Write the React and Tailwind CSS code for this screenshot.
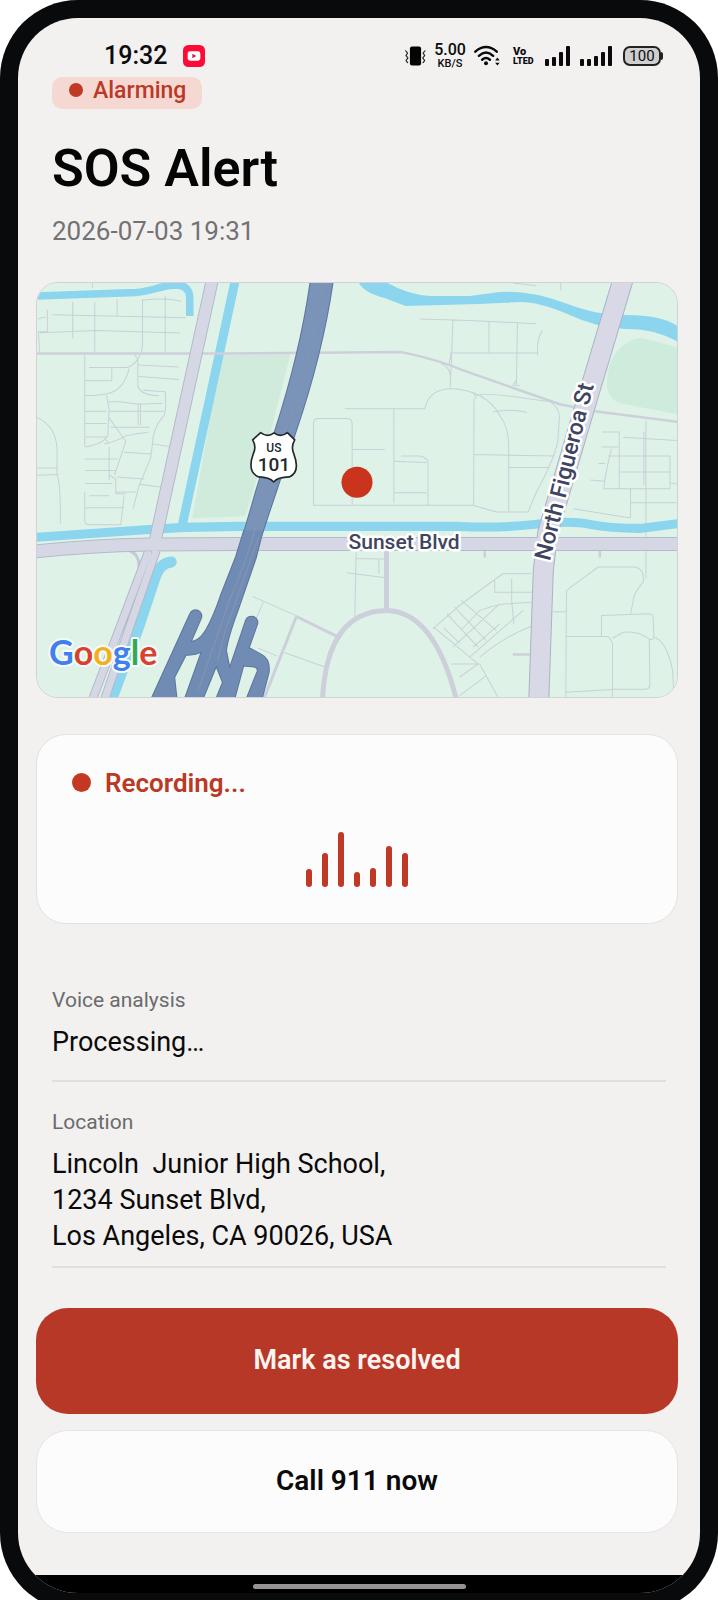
const LEVELS = [18, 34, 55, 15, 19, 41, 34];

function VibrateIcon() {
  return (
    <svg viewBox="0 0 64 60" className="h-5 w-[21px]" aria-hidden="true">
      <rect x="15" y="1" width="34" height="58" rx="6" fill="#050506" />
      <g fill="none" stroke="#222" strokeWidth="3.5" strokeLinejoin="round" strokeLinecap="round">
        <path d="M2 14l6 7-5 8 6 7-6 8 5 6" />
        <path d="M61 14l-6 7 5 8-6 7 6 8-5 6" />
      </g>
    </svg>
  );
}

function WifiIcon() {
  return (
    <svg viewBox="0 0 80 64" className="h-[21px] w-[26px]" aria-hidden="true">
      <g fill="none" stroke="#0b0b0d" strokeWidth="7.5" strokeLinecap="round">
        <path d="M4 20Q37-8 70 20" />
        <path d="M15 33Q37 13 59 33" />
        <path d="M25 45Q37 35 49 45" />
      </g>
      <circle cx="37" cy="56" r="6" fill="#0b0b0d" />
      <path d="M65 47l7-9 7 9zM65 54l7 9 7-9z" fill="#0b0b0d" />
    </svg>
  );
}

function Signal({ heights, className }) {
  return (
    <svg viewBox={`0 0 ${heights.length * 7 - 2} 20`} className={className} aria-hidden="true">
      {heights.map((h, i) => (
        <rect key={i} x={i * 7} y={20 - h} width="4" height={h} rx="1" fill="#0b0b0d" />
      ))}
    </svg>
  );
}

function StatusBar() {
  return (
    <div className="flex h-[59px] items-center justify-between pt-4 pr-[37px] pl-[86px] text-[#0b0b0d]">
      <div className="flex items-center gap-4">
        <span className="text-[25px] leading-7 font-medium">19:32</span>
        <svg viewBox="0 0 66 66" className="size-[22px]" role="img" aria-label="Video">
          <rect width="66" height="66" rx="16" fill="#fb0b35" />
          <rect x="14" y="19" width="38" height="28" rx="7" fill="#fff" />
          <path d="M28 26l12 7-12 7z" fill="#e01a3a" />
        </svg>
      </div>
      <div className="flex items-center">
        <VibrateIcon />
        <div className="ml-2 flex w-8 flex-col items-center font-medium">
          <span className="text-[16px] leading-4">5.00</span>
          <span className="text-[11px] leading-[11px]">KB/S</span>
        </div>
        <div className="ml-2 flex"><WifiIcon /></div>
        <div className="ml-[13px] flex w-[21px] flex-col font-black">
          <span className="text-[11px] leading-[11px]">Vo</span>
          <span className="text-[9px] leading-[9px]">LTED</span>
        </div>
        <Signal heights={[7, 9, 14, 20]} className="ml-[11px] h-5 w-[26px]" />
        <Signal heights={[7, 7, 10, 14, 20]} className="ml-[9px] h-5 w-[33px]" />
        <div className="ml-[10px] flex items-center">
          <span className="flex h-5 w-[38px] items-center justify-center rounded-[7px] border-2 border-[#222] bg-[#cfcfd0] text-[15px] leading-4">100</span>
          <span className="h-2 w-[2px] rounded-r-sm bg-[#222]" />
        </div>
      </div>
    </div>
  );
}

const SIDE_STREETS_NW = `M190 22V38 M70 119L470 128 M55 105V170M28 170H55 M28 132Q40 126 50 127 M32 173L200 166L453 174 M28 170L32 230
M131 80V190 M197 82V230 M264 72V122L275 124 M340 72V205L337 232 M340 76Q405 66 455 79 M408 62V230
M167 240V512 M180 277H295Q318 268 326 250 M316 238L326 252L334 238 M326 250V330Q330 360 390 362 M300 280Q285 345 235 356Q200 364 167 360
M167 317H248V280 M328 270L450 276 M328 304L450 313 M342 345L408 350Q412 400 405 420Q370 460 370 506L420 514
M232 360L240 400L236 480Q225 506 167 515 M238 380H270L330 387L400 384 M238 408H405 M167 408H232 M167 445H232 M167 485H232
M327 384V450M334 384V450 M245 456H362 M238 425L290 498L256 600 M228 492L240 505 M225 506Q260 500 290 482Q320 474 358 471
M240 515V615 M167 551H265 M167 586H262 M167 625H250 M285 531L367 536 M370 506L364 550L330 630L312 700 M262 605L345 611 M242 600L260 612V650H320 M330 627L400 636
M22 426Q80 450 84 520V600Q95 620 94 745 M22 578H86 M22 600L88 598
M167 650V735Q167 748 180 748H275L285 660 M180 661H240 M170 697H285 M260 640V655H290`;

const SIDE_STREETS_MIDDLE = `M542 132L690 136 M640 136L632 336 M604 266Q630 275 632 300 M635 235L628 266 M630 234H895 M690 136L890 146 M748 140V234 M833 145L830 330M830 315L820 330L840 332
M908 166Q890 190 894 240 M316 401H556Q566 345 630 340Q740 345 780 420Q808 455 807 520V708 M463 401V684 M222 690V445Q222 430 237 430H325Q338 432 338 445V690 M222 690H700
M338 523H436 M485 542H540Q560 545 565 560V690 M465 558L560 562 M463 652H560 M703 370L702 690 M700 350L710 370M710 362Q730 348 930 380Q965 398 958 440L954 500Q940 560 890 650L865 710
M760 410Q820 400 862 412 M702 538L945 542 M807 577H925 M700 690L770 710H865 M1000 700L1172 728 M820 24L890 32M963 24V45
M1172 728V682H1310 M1172 640V685 M1218 435V910 M1212 470V630 M1086 470H1138V640 M1150 486L1310 496 M1086 515H1135 M1105 542H1290V640H1092Q1095 600 1115 520 M1138 590H1290 M1076 565H1096 M1052 614L1092 618 M1290 622L1310 626`;

const SIDE_STREETS_SOUTH = `M350 180L346 380 M350 204L418 206V250 M322 247L438 262 M415 206H435 M40 318L172 376 M72 335L50 385 M55 472L112 496 M135 486L258 530
M580 415L660 345 M582 410L715 520 M612 412L660 458M622 370L715 470 M645 350L740 450 M665 330L770 420 M640 470L780 340M690 500L850 360 M663 420L720 360 M700 470L780 400 M720 500Q790 440 880 405H875
M660 345Q760 270 790 250H875 M765 265V305H875 M816 265V330L822 400 M720 360Q780 340 800 340L875 335 M715 520L660 560 M635 520H720L775 620 M740 555L660 615
M980 300L1075 230H1185Q1210 235 1210 260V275Q1180 310 1180 330L1172 370 M980 300L978 620 M940 364H978 M978 438H1105Q1115 450 1118 460V620 M1085 438V375L1230 370Q1242 375 1240 390L1242 440Q1240 450 1228 446Q1195 420 1150 425L1118 443
M1228 446L1230 580Q1230 596 1215 596H1120 M1242 440Q1280 450 1298 540Q1302 600 1300 620 M978 605L1118 597`;

const FREEWAY = "M312 276Q302 350 276 430L257 490L244 535L262 535L277 490L296 432Q324 350 334 276Z";

const RAMPS = `M615 0L590 80L545 195Q522 262 500 300Q480 333 454 335L485 263A17 17 0 0 0 453 250L337 505H412L405 440L440 372
Q468 374 488 362L437 505H490L531 405L551 455L531 505H585L612 405L645 408Q658 412 655 422L622 505H667L688 425
Q692 385 665 372L628 352L653 282A17 17 0 0 0 620 270L571 415L560 360Q565 320 595 240L650 80L670 0Z`;

function LocationMap() {
  return (
    <svg
      viewBox="38 283 639 413"
      className="block w-full"
      role="img"
      aria-label="Map of Sunset Blvd and North Figueroa St"
    >
      <rect x="30" y="275" width="660" height="430" fill="#dff2e8" />
      <path d="M222 355L291 354L268 445L246 516L193 518Z" fill="#d0ebdc" />
      <path d="M642 338L677 347V414L625 404Q609 402 607 385Q606 365 618 350Q630 338 642 338Z" fill="#ceecdc" />

      <g fill="none" stroke="#c8d0d8" strokeWidth="3">
        <path transform="translate(30 275) scale(.3333)" d={SIDE_STREETS_NW} />
        <path transform="translate(240 275) scale(.3333)" d={SIDE_STREETS_MIDDLE} />
        <path transform="translate(240 490) scale(.3333)" d={SIDE_STREETS_SOUTH} />
      </g>

      <g fill="none" stroke="#8bd5ee">
        <path d="M36 296L137 292.5C155 291 162 285 178 285Q190 286 190.500 297V316" strokeWidth="7.5" />
        <path d="M236 280L183 525" strokeWidth="9" />
        <path d="M36 537L150 529L185 527L240 526H460Q500 528 535 524T590 524T640 528L680 523" strokeWidth="9" />
        <path d="M172 561.5Q160 563 156 577L139 628L112 700" strokeWidth="11" strokeLinecap="round" />
      </g>
      <path d="M358 280H383Q405 294 430 296H470L500 292Q530 290 565 303Q598 316 626 315Q665 315 680 328V343Q655 328 625 329Q595 327 570 315Q540 302 520 302L480 304L406 306L385 298Q362 292 358 280Z" fill="#8bd5ee" />

      <g fill="none" stroke="#cdd0da" strokeWidth="2.5">
        <path d="M36 353.500H225L402 352Q440 360 460 369L560 404L595 411L680 422" />
        <path d="M297 616L338 636M297 616L265 697" strokeWidth="3" />
        <path d="M387 549V610M323 700Q327 611 387 610Q435 611 457 700" strokeWidth="5" />
        <path d="M485 550V557M600 550V557M513 654H530" />
      </g>

      <g fill="none" strokeLinejoin="round">
        <path d="M131 551Q140 553 140 568" stroke="#c6c9d6" strokeWidth="3" />
        <g stroke="#b4bac9" strokeWidth="13">
          <path d="M213 280L167 490L155 545" />
          <path d="M36 551Q90 545 150 544L240 543.500H680" strokeWidth="14" />
          <path d="M149 552L93 700M157 550L105 700" strokeWidth="9" />
        </g>
        <path d="M623 280L587 400L548 532L543.500 570L539 700" stroke="#a9b4c2" strokeWidth="21" />
        <g stroke="#d6d7e5" strokeWidth="11">
          <path d="M213 280L167 490L155 545" />
          <path d="M36 551Q90 545 150 544L240 543.500H680" strokeWidth="12" />
          <path d="M149 552L93 700M157 550L105 700" strokeWidth="7" />
        </g>
        <path d="M623 280L587 400L548 532L543.500 570L539 700" stroke="#d8d8e6" strokeWidth="19" />
      </g>

      <g strokeLinejoin="round">
        <path d={FREEWAY} fill="#768fb6" stroke="#5d759b" strokeWidth="2" />
        <path transform="translate(40 530) scale(.3333)" d={RAMPS} fill="#768fb6" stroke="#5d759b" strokeWidth="6" />
        <path d={FREEWAY} fill="#7a93b8" />
        <path transform="translate(40 530) scale(.3333)" d={RAMPS} fill="#718cb4" />
        <path d="M323 282Q312 360 285 432L267 490Q250 555 230 600L199 690M260 535L226 630L218 660" fill="none" stroke="#8a93ae" strokeWidth="1" />
      </g>

      <path
        transform="translate(240 275) scale(.3333)"
        d="M64 472Q84 488 104 473Q124 488 144 472L166 494Q154 515 163 535Q184 590 150 605Q115 606 103 620Q90 606 58 605Q22 590 42 535Q52 515 40 494Z"
        fill="#fff"
        stroke="#24282d"
        strokeWidth="5"
        strokeLinejoin="round"
      />
      <g className="font-[Roboto,sans-serif]" textAnchor="middle" fill="#24282d">
        <text x="274.500" y="452" fontSize="12" fontWeight="500">US</text>
        <text x="274.500" y="471" fontSize="19" fontWeight="500">101</text>
      </g>

      <circle cx="357.500" cy="482" r="15.500" fill="#cb341c" />

      <g
        className="font-[Roboto,sans-serif]"
        fontWeight="500"
        fontSize="21"
        fill="#3f4560"
        stroke="#fff"
        strokeWidth="5"
        strokeLinejoin="round"
        paintOrder="stroke"
      >
        <text x="349" y="549">Sunset Blvd</text>
        <text transform="translate(550 561) rotate(-76)" fontSize="23">North Figueroa St</text>
      </g>

      <text
        x="50"
        y="664"
        fontFamily="Lato, sans-serif"
        fontWeight="700"
        fontSize="34"
        stroke="#f4fbf8"
        strokeWidth="4"
        strokeLinejoin="round"
        paintOrder="stroke"
      >
        <tspan fill="#4080ee">G</tspan>
        <tspan fill="#d8412f">o</tspan>
        <tspan fill="#f2b01e">o</tspan>
        <tspan fill="#4080ee">g</tspan>
        <tspan fill="#35a853">l</tspan>
        <tspan fill="#d8412f">e</tspan>
      </text>
    </svg>
  );
}

function Detail({ label, className, children }) {
  return (
    <div className={`border-b-2 border-[#e0dfe0] ${className}`}>
      <dt className="text-[21px] leading-8 text-[#6b6b6d]">{label}</dt>
      <dd className="mt-2 text-[27px] leading-9 whitespace-pre-wrap text-[#0a0a0b]">{children}</dd>
    </div>
  );
}

export default function App() {
  return (
    <div className="overflow-hidden bg-white font-[Roboto,sans-serif]">
      <div className="-mb-[10px] rounded-[78px] bg-[#090a0c] p-[18px]">
        <div className="overflow-hidden rounded-[60px] bg-[#f2f1f0]">
          <StatusBar />

          <main className="pr-[22px] pb-[42px] pl-[18px]">
            <header className="px-4">
              <p className="inline-flex h-8 items-start rounded-[10px] bg-[#f6d8d3] pr-4 pl-[17px] text-[#b93a26]">
                <span className="mt-[6px] mr-[10px] size-[14px] rounded-full bg-[#c03a24]" />
                <span className="text-[23px] leading-7 font-medium">Alarming</span>
              </p>
              <h1 className="mt-[30px] text-[52px] leading-[60px] font-semibold text-[#050506]">SOS Alert</h1>
              <p className="mt-4 text-[26px] leading-8 text-[#727274]">2026-07-03 19:31</p>
            </header>

            <div className="mt-[35px] overflow-hidden rounded-[22px] border border-[#cfd2d6]">
              <LocationMap />
            </div>

            <section className="mt-9 rounded-[30px] border border-[#e4e2e4] bg-[#fcfcfc] px-[35px] pt-[30px] pb-9">
              <h2 className="flex items-center gap-[14px] text-[26px] leading-9 font-semibold text-[#b93a26]">
                <span className="size-[19px] rounded-full bg-[#c23822]" />
                Recording...
              </h2>
              <div className="mt-[31px] flex h-[55px] items-end justify-center gap-[10px]" role="img" aria-label="Sound level">
                {LEVELS.map((level, i) => (
                  <span key={i} className="w-[6px] rounded-full bg-[#bf3a26]" style={{ height: level }} />
                ))}
              </div>
            </section>

            <dl className="mt-[60px] pr-3 pl-4">
              <Detail label="Voice analysis" className="pb-5">Processing…</Detail>
              <Detail label="Location" className="pt-6 pb-3">
                {"Lincoln  Junior High School,\n1234 Sunset Blvd,\nLos Angeles, CA 90026, USA"}
              </Detail>
            </dl>

            <div className="mt-10 flex flex-col gap-4">
              <button type="button" className="h-[106px] rounded-[32px] bg-[#b83827] text-[27px] font-semibold text-[#fff4f0]">
                Mark as resolved
              </button>
              <button type="button" className="h-[103px] rounded-[32px] border border-[#e6e4e6] bg-[#fcfcfc] text-[28px] font-semibold text-[#0a0a0b]">
                Call 911 now
              </button>
            </div>
          </main>

          <div className="flex h-[18px] items-center justify-center bg-black">
            <span className="mt-[6px] h-[5px] w-[213px] rounded-full bg-[#949292]" />
          </div>
        </div>
      </div>
    </div>
  );
}
